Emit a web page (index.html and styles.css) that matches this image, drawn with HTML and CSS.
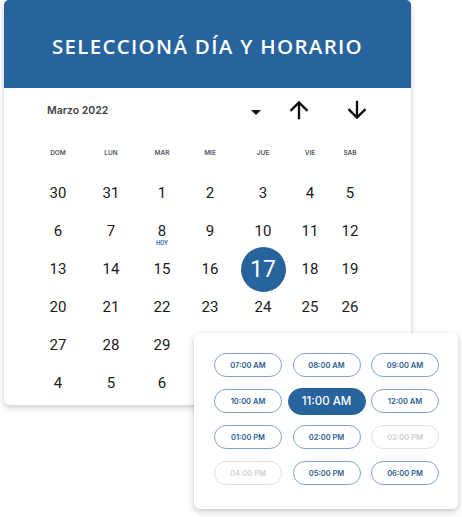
FILE: index.html
```html
<!DOCTYPE html>
<html lang="es">
<head>
    <meta charset="UTF-8">
    <meta name="viewport" content="width=device-width, initial-scale=1.0">
    <title>Seleccioná día y horario</title>
    <link rel="stylesheet" href="styles.css">
</head>
<body>
    <div class="scene">
        <div class="calendar">
            <div class="calendar-header">
                <h1>SELECCIONÁ DÍA Y HORARIO</h1>
            </div>
            <div class="toolbar">
                <span class="month">Marzo 2022</span>
                <button class="icon-btn drop" aria-label="Elegir mes">
                    <svg viewBox="0 0 24 24" width="24" height="24"><path d="M7 10l5 5 5-5z"/></svg>
                </button>
                <button class="icon-btn up" aria-label="Mes anterior">
                    <svg viewBox="0 0 24 24" width="28" height="28"><path d="M4 12l1.41 1.41L11 7.83V20h2V7.83l5.58 5.59L20 12l-8-8-8 8z"/></svg>
                </button>
                <button class="icon-btn down" aria-label="Mes siguiente">
                    <svg viewBox="0 0 24 24" width="28" height="28"><path d="M20 12l-1.41-1.41L13 16.17V4h-2v12.17l-5.58-5.59L4 12l8 8 8-8z"/></svg>
                </button>
            </div>
            <div class="weekdays">
                <span>DOM</span><span>LUN</span><span>MAR</span><span>MIE</span><span>JUE</span><span>VIE</span><span>SAB</span>
            </div>
            <div class="days">
                <span>30</span><span>31</span><span>1</span><span>2</span><span>3</span><span>4</span><span>5</span>
                <span>6</span><span>7</span><span class="today">8<small>HOY</small></span><span>9</span><span>10</span><span>11</span><span>12</span>
                <span>13</span><span>14</span><span>15</span><span>16</span><span class="selected"><b>17</b></span><span>18</span><span>19</span>
                <span>20</span><span>21</span><span>22</span><span>23</span><span>24</span><span>25</span><span>26</span>
                <span>27</span><span>28</span><span>29</span><span>30</span><span>31</span><span>1</span><span>2</span>
                <span>4</span><span>5</span><span>6</span><span>7</span><span>8</span><span>9</span><span>10</span>
            </div>
        </div>

        <div class="times">
            <button class="slot">07:00 AM</button>
            <button class="slot">08:00 AM</button>
            <button class="slot">09:00 AM</button>
            <button class="slot">10:00 AM</button>
            <button class="slot active">11:00 AM</button>
            <button class="slot">12:00 AM</button>
            <button class="slot">01:00 PM</button>
            <button class="slot">02:00 PM</button>
            <button class="slot disabled">03:00 PM</button>
            <button class="slot disabled">04:00 PM</button>
            <button class="slot">05:00 PM</button>
            <button class="slot">06:00 PM</button>
        </div>
    </div>
</body>
</html>
```

FILE: styles.css
```css
body {
    margin: 0;
    background: #fff;
    font-family: Roboto, "Liberation Sans", sans-serif;
}

.scene {
    position: relative;
    width: 462px;
    height: 517px;
}

.calendar {
    margin-left: 4px;
    width: 407px;
    height: 405px;
    background: #fff;
    border-radius: 5px;
    overflow: hidden;
    box-shadow: 0 3px 6px rgba(0, 0, 0, 0.18), 0 0 2px rgba(0, 0, 0, 0.08);
}

.calendar-header {
    height: 88px;
    background: #27639c;
    display: flex;
    align-items: center;
    justify-content: center;
}

.calendar-header h1 {
    margin: 4px 0 0;
    color: #fff;
    font-family: "Open Sans", sans-serif;
    font-weight: 600;
    font-size: 20.5px;
    letter-spacing: 1.3px;
}

.toolbar {
    height: 44px;
    display: flex;
    align-items: center;
    padding-left: 43px;
}

.month {
    font-family: Inter, sans-serif;
    font-weight: 600;
    font-size: 10.5px;
    color: #444;
    width: 197px;
}

.icon-btn {
    background: none;
    border: none;
    padding: 0;
    display: flex;
    cursor: pointer;
}

.icon-btn svg {
    fill: #111;
}

.drop {
    margin-top: 4px;
}

.up {
    margin-left: 17px;
}

.down {
    margin-left: 30px;
}

.weekdays,
.days {
    display: grid;
    grid-template-columns: 44px 62px 40px 56px 50px 44px 36px;
    padding-left: 32px;
    text-align: center;
}

.weekdays {
    height: 42px;
    align-items: center;
    font-family: Inter, sans-serif;
    font-weight: 600;
    font-size: 6.5px;
    color: #555;
}

.days {
    grid-auto-rows: 38px;
    font-size: 15px;
    color: #1b1b1b;
}

.days span {
    position: relative;
    display: flex;
    align-items: center;
    justify-content: center;
}

.days .today small {
    position: absolute;
    left: 0;
    right: 0;
    top: 28px;
    font-family: Inter, sans-serif;
    font-weight: 700;
    font-size: 5.5px;
    color: #3b73b3;
}

.days .selected b {
    display: flex;
    align-items: center;
    justify-content: center;
    width: 45px;
    height: 45px;
    flex: none;
    border-radius: 50%;
    background: #27639c;
    color: #fff;
    font-weight: 400;
    font-size: 23px;
}

.times {
    position: absolute;
    left: 194px;
    top: 333px;
    width: 264px;
    height: 176px;
    box-sizing: border-box;
    padding: 20px 19px 0 20px;
    background: #fff;
    border-radius: 6px;
    box-shadow: 0 3px 7px rgba(0, 0, 0, 0.2), 0 0 2px rgba(0, 0, 0, 0.08);
    display: grid;
    grid-template-columns: repeat(3, 68px);
    grid-auto-rows: 24px;
    column-gap: 10.5px;
    row-gap: 12px;
}

.slot {
    background: #fff;
    border: 1px solid #7fa3cf;
    border-radius: 12px;
    font-family: Inter, sans-serif;
    font-weight: 600;
    font-size: 7.5px;
    color: #2b5d93;
    padding: 0;
    cursor: pointer;
}

.slot.active {
    margin: -1.5px -5px;
    border-color: #27639c;
    border-radius: 14px;
    background: #27639c;
    color: #fff;
    font-weight: 500;
    font-size: 11.5px;
}

.slot.disabled {
    border-color: #e2e2e2;
    color: #cfcfcf;
    cursor: default;
}
```
